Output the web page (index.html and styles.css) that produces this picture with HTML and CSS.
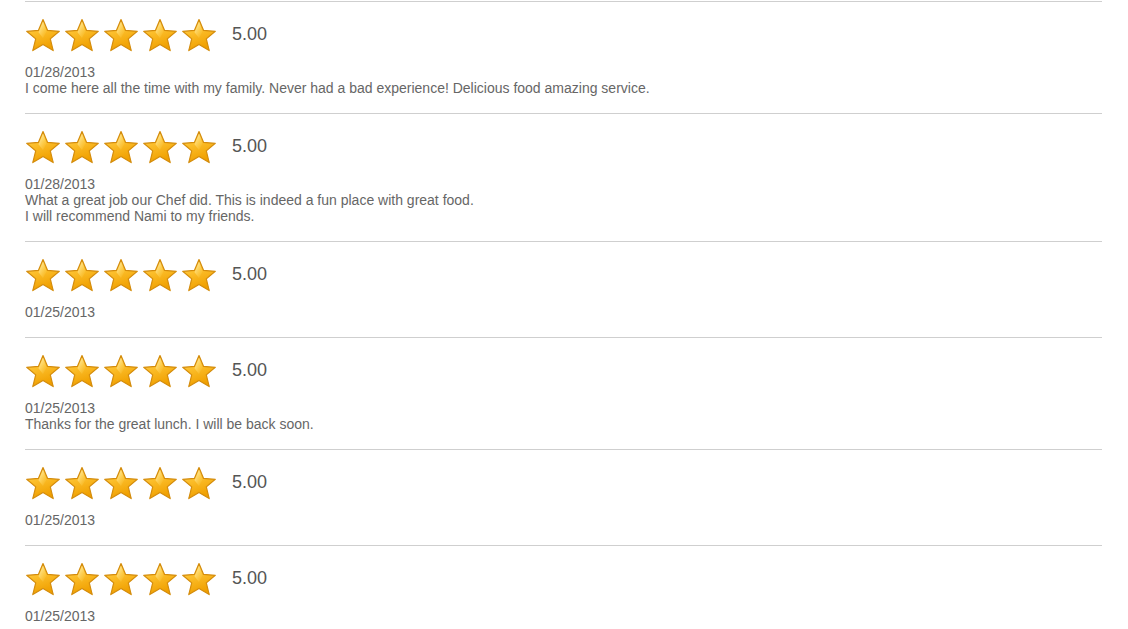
FILE: index.html
```html
<!DOCTYPE html>
<html>
<head>
<meta charset="utf-8">
<link rel="stylesheet" href="styles.css">
</head>
<body>
<svg width="0" height="0" class="defs">
  <defs>
    <linearGradient id="sg" x1="0" y1="0" x2="0.35" y2="1">
      <stop offset="0" stop-color="#ffe07a"/>
      <stop offset="0.45" stop-color="#fcbf2c"/>
      <stop offset="1" stop-color="#f0a000"/>
    </linearGradient>
    <linearGradient id="sh" x1="0" y1="0" x2="1" y2="1">
      <stop offset="0" stop-color="#fff4c0" stop-opacity="0.9"/>
      <stop offset="1" stop-color="#ffd24a" stop-opacity="0"/>
    </linearGradient>
    <symbol id="star" viewBox="0 0 36 36">
      <path d="M18 1.5 L22.6 12.4 L34.3 13.3 L25.3 20.9 L28.2 32.6 L18 26.4 L7.8 32.6 L10.7 20.9 L1.7 13.3 L13.4 12.4 Z" fill="url(#sg)" stroke="#d48c0c" stroke-width="1.2" stroke-linejoin="round"/>
      <path d="M18 4 L21.6 13.4 L18 20 L13.5 14.2 Z" fill="url(#sh)"/>
    </symbol>
  </defs>
</svg>
<div class="reviews">
  <div class="review">
    <div class="rating">
      <div class="stars"><svg class="star"><use href="#star"/></svg><svg class="star"><use href="#star"/></svg><svg class="star"><use href="#star"/></svg><svg class="star"><use href="#star"/></svg><svg class="star"><use href="#star"/></svg></div>
      <span class="score">5.00</span>
    </div>
    <div class="date">01/28/2013</div>
    <div class="text">I come here all the time with my family. Never had a bad experience! Delicious food amazing service.</div>
  </div>
  <div class="review">
    <div class="rating">
      <div class="stars"><svg class="star"><use href="#star"/></svg><svg class="star"><use href="#star"/></svg><svg class="star"><use href="#star"/></svg><svg class="star"><use href="#star"/></svg><svg class="star"><use href="#star"/></svg></div>
      <span class="score">5.00</span>
    </div>
    <div class="date">01/28/2013</div>
    <div class="text">What a great job our Chef did. This is indeed a fun place with great food.<br>I will recommend Nami to my friends.</div>
  </div>
  <div class="review">
    <div class="rating">
      <div class="stars"><svg class="star"><use href="#star"/></svg><svg class="star"><use href="#star"/></svg><svg class="star"><use href="#star"/></svg><svg class="star"><use href="#star"/></svg><svg class="star"><use href="#star"/></svg></div>
      <span class="score">5.00</span>
    </div>
    <div class="date">01/25/2013</div>
  </div>
  <div class="review">
    <div class="rating">
      <div class="stars"><svg class="star"><use href="#star"/></svg><svg class="star"><use href="#star"/></svg><svg class="star"><use href="#star"/></svg><svg class="star"><use href="#star"/></svg><svg class="star"><use href="#star"/></svg></div>
      <span class="score">5.00</span>
    </div>
    <div class="date">01/25/2013</div>
    <div class="text">Thanks for the great lunch. I will be back soon.</div>
  </div>
  <div class="review">
    <div class="rating">
      <div class="stars"><svg class="star"><use href="#star"/></svg><svg class="star"><use href="#star"/></svg><svg class="star"><use href="#star"/></svg><svg class="star"><use href="#star"/></svg><svg class="star"><use href="#star"/></svg></div>
      <span class="score">5.00</span>
    </div>
    <div class="date">01/25/2013</div>
  </div>
  <div class="review">
    <div class="rating">
      <div class="stars"><svg class="star"><use href="#star"/></svg><svg class="star"><use href="#star"/></svg><svg class="star"><use href="#star"/></svg><svg class="star"><use href="#star"/></svg><svg class="star"><use href="#star"/></svg></div>
      <span class="score">5.00</span>
    </div>
    <div class="date">01/25/2013</div>
  </div>
</div>
</body>
</html>
```
FILE: styles.css
```css
html, body {
  margin: 0;
  padding: 0;
  background: #fff;
  overflow: hidden;
}
body {
  font-family: "Liberation Sans", Arial, sans-serif;
  color: #666;
  font-size: 14px;
  line-height: 16px;
}
.defs {
  position: absolute;
  width: 0;
  height: 0;
}
.reviews {
  margin: 1px 0 0 25px;
  width: 1077px;
}
.review {
  border-top: 1px solid #cfcfcf;
  padding: 16px 0 17px;
}
.rating {
  display: flex;
  align-items: center;
  height: 36px;
  margin-bottom: 10px;
}
.stars {
  display: flex;
  gap: 3px;
}
.star {
  width: 36px;
  height: 36px;
  display: block;
}
.score {
  margin-left: 15px;
  margin-top: -4px;
  font-size: 18px;
  color: #555;
}
```
